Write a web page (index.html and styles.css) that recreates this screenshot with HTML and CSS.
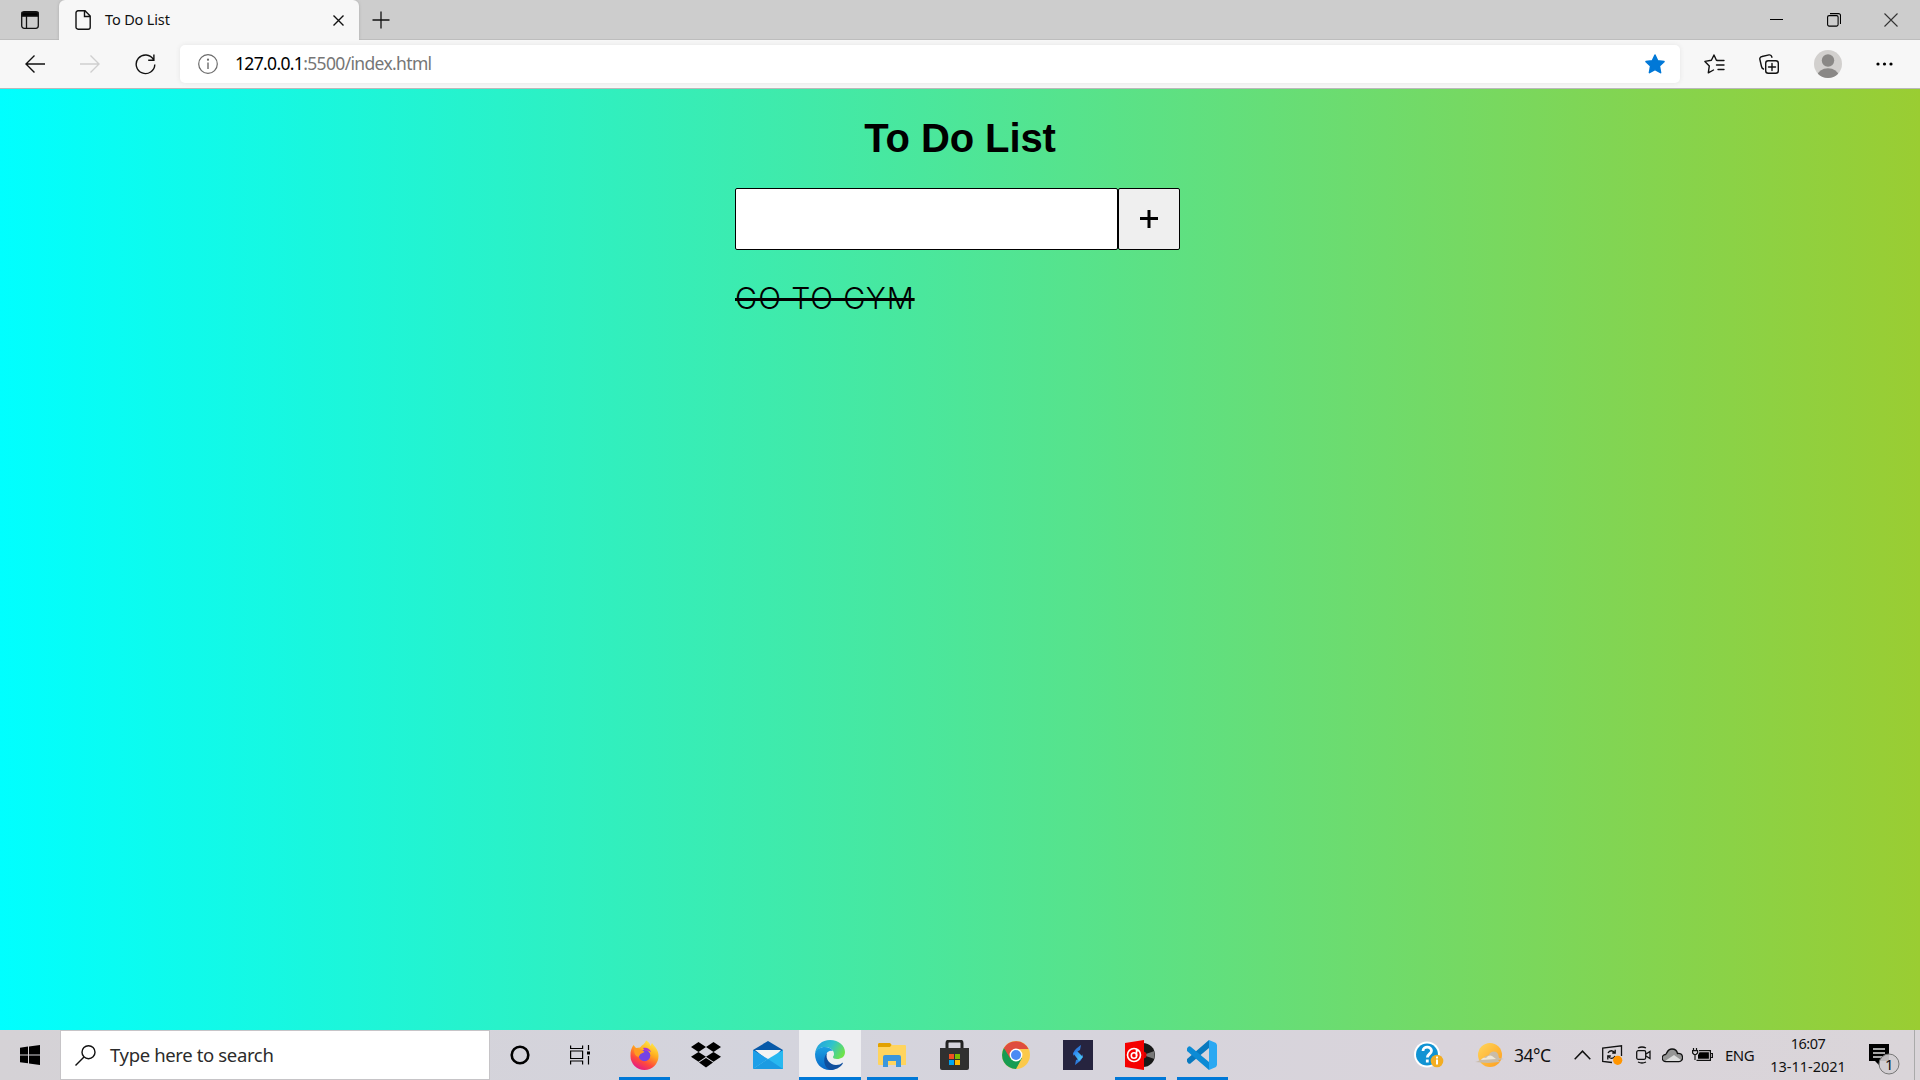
FILE: index.html
```html
<!DOCTYPE html>
<html lang="en">
<head>
<meta charset="utf-8">
<title>To Do List</title>
<link rel="stylesheet" href="styles.css">
</head>
<body>
<div class="screen">
  <header class="tabstrip">
    <div class="tab-actions">
      <svg width="18" height="18" viewBox="0 0 18 18" fill="none" stroke="#111" stroke-width="1.3"><rect x=".7" y=".7" width="16.6" height="16.6" rx="2.5"/><path d="M1 1.5h16v3.700H1z" fill="#000"/><path d="M5.500 5v12"/></svg>
    </div>
    <div class="tab">
      <svg width="16" height="20" viewBox="0 0 16 20" fill="none" stroke="#111" stroke-width="1.400"><path d="M3 .8h7l5.200 5.200v11.200a2 2 0 0 1-2 2H3a2 2 0 0 1-2-2V2.800a2 2 0 0 1 2-2zM9.500 1v5.500H15"/></svg>
      <span class="tab-title">To Do List</span>
      <svg class="tab-close" width="11" height="11" viewBox="0 0 11 11" stroke="#111" stroke-width="1.400"><path d="M.5.5l10 10M10.500.5l-10 10"/></svg>
    </div>
    <svg class="new-tab" width="18" height="18" viewBox="0 0 18 18" stroke="#111" stroke-width="1.300"><path d="M9 .5v17M.5 9h17"/></svg>
    <div class="window-controls">
      <span><svg width="13" height="13" stroke="#000"><path d="M0 6.500h13"/></svg></span>
      <span><svg width="14" height="14" viewBox="0 0 14 14" fill="none" stroke="#000" stroke-width="1.100"><rect x=".6" y="2.600" width="10.500" height="10.500" rx="1.500"/><path d="M3 .6h8.500a2 2 0 0 1 2 2V11"/></svg></span>
      <span><svg width="14" height="14" viewBox="0 0 14 14" stroke="#333" stroke-width="1.100"><path d="M.5.5l13 13M13.500.5l-13 13"/></svg></span>
    </div>
  </header>
  <nav class="toolbar">
    <div class="nav-buttons">
      <svg width="20" height="18" viewBox="0 0 20 18" fill="none" stroke="#111" stroke-width="1.400"><path d="M20 9H1M9.500.5L1 9l8.500 8.500"/></svg>
      <svg width="20" height="18" viewBox="0 0 20 18" fill="none" stroke="#cfcfcf" stroke-width="1.400"><path d="M0 9h19M10.500.5L19 9l-8.500 8.500"/></svg>
      <svg width="21" height="21" viewBox="0 0 21 21" fill="none" stroke="#111" stroke-width="1.400"><path d="M18.500 5.500A9.300 9.300 0 1 0 19.800 10.500M18.900.5v5.700h-5.700"/></svg>
    </div>
    <div class="address">
      <svg width="20" height="20" viewBox="0 0 20 20" fill="none" stroke="#6b6b6b" stroke-width="1.200"><circle cx="10" cy="10" r="9.300"/><path d="M10 8.500V15" stroke-width="1.400"/><circle cx="10" cy="5.700" r=".5" fill="#6b6b6b"/></svg>
      <span class="url"><b>127.0.0.1</b>:5500/index.html</span>
      <svg class="fav" width="20" height="20" viewBox="0 0 20 20"><path d="M10 1l2.700 5.700 6.300.9-4.600 4.400 1.200 6.700L10 15.600l-5.600 3.100L5.600 12 1 7.600l6.300-.9z" fill="#0078d7" stroke="#0078d7" stroke-width="1.500" stroke-linejoin="round"/></svg>
    </div>
    <div class="tools">
      <svg width="21" height="20" viewBox="0 0 21 20" fill="none" stroke="#111" stroke-width="1.400" stroke-linejoin="round" stroke-linecap="round"><path d="M13.200 6.500l-.8-.2L10 1 7.400 6.300.9 7.400l4.400 4.500-1 7L9.500 16M13.500 6.500H20M12.500 11H20M14 15.500h6"/></svg>
      <svg width="20" height="20" viewBox="0 0 20 20" fill="none" stroke="#111" stroke-width="1.400" stroke-linecap="round"><rect x="6.700" y="6.700" width="12.600" height="12.600" rx="2.500"/><path d="M13 9.500v7M9.500 13h7M4.500 15c-1.500-.5-1.800-1.500-2-2.500L.9 5.500C.5 4 1.500 2.800 3 2.500L10 .9c1.600-.3 2.500.5 3 2.300"/></svg>
      <svg width="28" height="28" viewBox="0 0 28 28"><defs><clipPath id="avatar"><circle cx="14" cy="14" r="14"/></clipPath></defs><circle cx="14" cy="14" r="14" fill="#d2d0ce"/><g fill="#8a8886" clip-path="url(#avatar)"><circle cx="14" cy="10.500" r="6.200"/><ellipse cx="14" cy="25.500" rx="10.500" ry="7.200"/></g></svg>
      <svg width="17" height="4" viewBox="0 0 17 4"><circle cx="2" cy="2" r="1.600"/><circle cx="8.500" cy="2" r="1.600"/><circle cx="15" cy="2" r="1.600"/></svg>
    </div>
  </nav>

  <main class="page">
    <div class="todo">
      <h1>To Do List</h1>
      <form class="entry">
        <input class="entry-text" type="text" aria-label="Item">
        <button class="entry-add" type="button" aria-label="Add"><svg width="18" height="18" viewBox="0 0 18 18" stroke="#000" stroke-width="3"><path d="M9 0v18M0 8.500h18"/></svg></button>
      </form>
      <ul class="items"><li class="done">GO TO GYM</li></ul>
    </div>
  </main>

  <footer class="taskbar">
    <div class="start"><svg width="20" height="20" viewBox="0 0 20 20"><path d="M0 2.700l8-1.100v7.800H0zM9 1.500L20 0v9.400H9zM0 10.400h8v7.900l-8-1.100zM9 10.400h11V20L9 18.500z"/></svg></div>
    <div class="search">
      <svg width="21" height="21" viewBox="0 0 21 21" fill="none" stroke="#111" stroke-width="1.400"><circle cx="13.500" cy="7.200" r="6.500"/><path d="M9 12L.5 20.500"/></svg>
      <span>Type here to search</span>
    </div>
    <div class="apps">
      <span class="app"><svg width="20" height="20"><circle cx="10" cy="10" r="8.300" fill="none" stroke="#000" stroke-width="2.600"/></svg></span>
      <span class="app"><svg width="20" height="20" viewBox="0 0 20 20" fill="none" stroke="#000" stroke-width="1.200"><path d="M.6.500v3h12v-3M.6 19.500v-3.500h12v3.500M.6 6h12v7.500H.6zM18.500 0v5M18.500 11v8.500"/><path d="M17 6.500h3v3h-3z" fill="#000" stroke="none"/></svg></span>
      <span class="app running"><svg width="29" height="30" viewBox="0 0 29 30"><defs><linearGradient id="ff" x1=".8" y1="0" x2=".3" y2="1"><stop offset="0" stop-color="#fff44f"/><stop offset=".4" stop-color="#ffac1e"/><stop offset=".72" stop-color="#ff4a3c"/><stop offset="1" stop-color="#e3168a"/></linearGradient></defs><path d="M3.500 5l2.500 3 4-.5C12 5 15 4 16 .5c2.500 1 4 3 4.500 5.500l1.500-3c3 4 6.500 7 6.500 13a14 14 0 0 1-28 0C.3 11 1.500 8 3.500 5z" fill="url(#ff)"/><circle cx="14.500" cy="15.500" r="5.800" fill="#7542e5"/><path d="M4 9c3-2 5 0 9 1.500l1.500 1.500-4 2-2 3C5 16 4 13 4 9z" fill="#ff9b22"/><path d="M13 8c4-1 7 1 8 4-3-2-5-1-6-1z" fill="#ab36cf"/></svg></span>
      <span class="app"><svg width="30" height="26" viewBox="0 0 30 26"><path d="M7.500 0L15 5l-7.500 5L0 5zM22.500 0L30 5l-7.500 5L15 5zM7.500 10l7.500 4.700-7.500 5L0 14.700zM22.500 10l7.500 4.700-7.500 5-7.500-5zM15 16l7 4.600-7 4.900-7-4.900z"/></svg></span>
      <span class="app"><svg width="30" height="28" viewBox="0 0 30 28"><path d="M0 9l15-9 15 9v7H0z" fill="#0859a8"/><path d="M2 9h26l-11 12z" fill="#f3f3f3"/><path d="M0 9l15 9-15 10z" fill="#1d9fe8"/><path d="M30 9L15 18 0 28h30z" fill="#28b8f0"/><path d="M15 18L30 28H0z" fill="#1b9be2"/></svg></span>
      <span class="app running active"><svg width="30" height="30" viewBox="0 0 30 30"><defs><linearGradient id="eg" x1="0" y1=".2" x2="1" y2=".6"><stop offset="0" stop-color="#249fe0"/><stop offset=".5" stop-color="#2fc3cc"/><stop offset="1" stop-color="#6fe34a"/></linearGradient><linearGradient id="eb" y1="0" y2="1" x2="0"><stop stop-color="#1ba0e2"/><stop offset="1" stop-color="#0866c6"/></linearGradient></defs><path d="M0 14C1 5 7 0 15 0c9 0 15 6 15 12 0 5-4 7-8 7-3 0-4-1-4-2 0-1 1-1 1-3 0-4-4-7-9-7S1 10 0 14z" fill="url(#eg)"/><path d="M0 14c1-5 5-7 10-7 3 0 6 1 8 4-4-1-7 1-7 6 0 7 5 12 9 12-2 1-3 1-5 1C6 30 0 23 0 14z" fill="url(#eb)"/><path d="M12 13c-2 6 3 12 9 12 3 0 5-1 6-2 .7-.4 1 .2.700.8C25 28 20 30 16 30 9 29 7 18 12 13z" fill="#104f9e"/></svg></span>
      <span class="app running"><svg width="28" height="24" viewBox="0 0 28 24"><path d="M1 0h11l2 2h13a1 1 0 0 1 1 1v19H1a1 1 0 0 1-1-1V1z" fill="#ffd45e"/><path d="M1 0h11l1.500 2L12 4H0V1z" fill="#e2a100"/><path d="M5 24V14a2 2 0 0 1 2-2h14a2 2 0 0 1 2 2v10h-5v-6h-8v6z" fill="#3a96dd"/></svg></span>
      <span class="app"><svg width="29" height="30" viewBox="0 0 29 30"><path d="M7 8V3a2 2 0 0 1 2-2h11a2 2 0 0 1 2 2v5" fill="none" stroke="#222" stroke-width="3"/><path d="M0 8h29v20a2 2 0 0 1-2 2H2a2 2 0 0 1-2-2z" fill="#303030"/><path d="M9 14h5v5H9z" fill="#f25022"/><path d="M15 14h5v5h-5z" fill="#7fba00"/><path d="M9 20h5v5H9z" fill="#00a4ef"/><path d="M15 20h5v5h-5z" fill="#ffb900"/></svg></span>
      <span class="app"><svg width="28" height="28" viewBox="0 0 28 28"><circle cx="14" cy="14" r="14" fill="#fbc94b"/><path d="M14 14L1.900 7A14 14 0 0 0 14 28l6-11z" fill="#179c52"/><path d="M1.900 7A14 14 0 0 1 26.500 8H14l-6 9z" fill="#df4d3e"/><circle cx="14" cy="14" r="6.400" fill="#fff"/><circle cx="14" cy="14" r="5" fill="#4a8af4"/></svg></span>
      <span class="app"><svg width="30" height="30" viewBox="0 0 30 30"><defs><linearGradient id="sg" x2="1" y2="1"><stop stop-color="#277af0"/><stop offset="1" stop-color="#55d7f3"/></linearGradient></defs><path d="M0 0h30v30H0z" fill="#26243f"/><path d="M18 5l-1 5-5 3-2 3c0-6 4-8 8-11zM12 25l1-5 5-2 2-4c0 6-4 8-8 11z" fill="#2d7cdc"/><path d="M10 13l4-2 6 6-4 4z" fill="url(#sg)"/></svg></span>
      <span class="app running"><svg width="30" height="30" viewBox="0 0 30 30"><circle cx="18" cy="15" r="12" fill="#181818"/><path d="M18 15l11.500-4v8z" fill="#777"/><circle cx="18" cy="15" r="3.500" fill="#d60000"/><path d="M0 3l19-3v30L0 27z" fill="#f50000"/><g fill="none" stroke="#fff" stroke-width="1.600"><circle cx="9" cy="15" r="6.500"/><circle cx="9" cy="15.500" r="2.700"/><path d="M11.500 16v-6l2 1"/></g></svg></span>
      <span class="app running"><svg width="30" height="30" viewBox="0 0 30 30"><path d="M0 19L22 0v8L4 23a2 2 0 0 1-3 0c-1-1-2-3-1-4z" fill="#0879bf"/><path d="M0 11c-1-1 0-3 1-4a2 2 0 0 1 3 0l18 15v8z" fill="#0c8bd5"/><path d="M22 0l7 3 1 2v20l-1 2-7 3z" fill="#2aa8f2"/></svg></span>
    </div>
    <div class="tray">
      <span class="help"><svg width="30" height="28" viewBox="0 0 30 28"><circle cx="13" cy="13.500" r="13" fill="#fff"/><circle cx="13" cy="13.500" r="11" fill="#1193d3"/><path d="M9 10c0-5 8.500-5 8.500-.3 0 3-4.200 3.300-4.200 6.800M13.300 18.500v3" fill="none" stroke="#fff" stroke-width="2.800"/><circle cx="23" cy="20" r="6.300" fill="#f3ad22"/><path d="M23 18.500v5M23 15.500v2" stroke="#fff" stroke-width="2"/></svg></span>
      <span class="weather"><svg width="30" height="25" viewBox="0 0 30 25"><defs><linearGradient id="sun" x2="1" y2="1"><stop stop-color="#ffd65c"/><stop offset="1" stop-color="#ff9d1c"/></linearGradient></defs><circle cx="15" cy="12" r="12" fill="url(#sun)"/><path d="M0 19c3 0 5-3 9-3 1-4 4-3 5-4 1-4 7-5 9-1l1 4 5 1-6 1 2 2-12 1z" fill="#c9bca8"/><path d="M6 17c2-3 4-2 5-2 2-3 5-3 6-2l4 3z" fill="#eee7d8"/></svg>34°C</span>
      <span class="chevron"><svg width="17" height="10" viewBox="0 0 17 10" fill="none" stroke="#111" stroke-width="1.500"><path d="M.7 9.300L8.500 1.200l7.800 8.100"/></svg></span>
      <span class="sync"><svg width="21" height="20" viewBox="0 0 21 20" fill="none" stroke="#111" stroke-width="1.300"><path d="M10 17.500L.7 16.500V3L19.500.8V11M6 8c1.500-3 5-3 7 0M13.200 4.800V8h-3M13 11c-1.500 3-5 3-6.500.5M5.800 14.500V11h3"/><circle cx="15.700" cy="15.300" r="4.600" fill="#ff9500" stroke="none"/></svg></span>
      <span class="meet"><svg width="15" height="18" viewBox="0 0 15 18" fill="none" stroke="#111" stroke-width="1.300"><rect x=".7" y="4.700" width="9" height="8.600" rx="1.500"/><path d="M10 8l4-2.500v7L10 10M2 2Q6 0 10 2M2 16q4 2 8 0"/></svg></span>
      <span class="cloud"><svg width="21" height="15" viewBox="0 0 21 15"><path d="M4 13.500a3.500 3.500 0 0 1-.5-7C5 6 5 1 10 1c3.500 0 5 2 5.500 4.500C22 5 22 13.500 17 13.500z" fill="#969696" stroke="#111" stroke-width="1.300"/><path d="M3 13l9-6 7 5-2 1z" fill="#ddd"/></svg></span>
      <span class="battery"><svg width="21" height="14" viewBox="0 0 21 14" fill="none" stroke="#111" stroke-width="1.200"><path d="M1.500 0v2M4.500 0v2M.6 2.600h5v2.400l-1.500 1.500H2L.6 5zM3 6.500V12M7 2.600h11.400v9.800H4.500M19 5.500h1.400v4H19"/><path d="M7.500 4.300h9.400v6.400H6V7z" fill="#000" stroke="none"/></svg></span>
      <span class="language">ENG</span>
      <span class="clock"><span>16:07</span><span class="date">13-11-2021</span></span>
      <span class="notifications"><svg width="31" height="31" viewBox="0 0 31 31"><path d="M0 0h20v17H11v5l-5-5H0z"/><path d="M4 5h12M4 9h12M4 13h9" stroke="#ddd" stroke-width="1.300"/><circle cx="20" cy="20" r="10" fill="#d0cdd0" fill-opacity=".9" stroke="#777"/></svg><span class="count">1</span></span>
      <span class="show-desktop"></span>
    </div>
  </footer>
</div>
</body>
</html>
```
FILE: styles.css
```css
* { box-sizing: border-box; }
body { margin: 0; font-family: "Noto Sans", "Open Sans", sans-serif; color: #111; }
svg { display: block; flex: none; }
.screen { width: 1920px; height: 1080px; display: flex; flex-direction: column; overflow: hidden; }

.tabstrip { height: 40px; display: flex; align-items: center; background: #cdcdcd; box-shadow: inset 0 -1px #bdbdbd; }
.tab-actions { width: 59px; padding-left: 21px; }
.tab { width: 300px; height: 40px; display: flex; align-items: center; padding: 0 15px 0 16px; background: #f7f7f7; border-radius: 6px 6px 0 0; box-shadow: 0 0 3px #aaa; clip-path: inset(0 -3px); }
.tab-title { flex: 1; margin-left: 14px; padding-bottom: 2px; font-size: 14.5px; letter-spacing: -.15px; }
.new-tab { margin-left: 13px; }
.window-controls { margin-left: auto; display: flex; }
.window-controls span { width: 57.500px; display: flex; justify-content: center; }

.toolbar { height: 49px; display: flex; align-items: center; background: #f7f7f7; border-bottom: 1px solid #b9b9b9; }
.nav-buttons { width: 180px; display: flex; align-items: center; gap: 35px; padding-left: 25px; }
.address { width: 1500px; height: 38px; display: flex; align-items: center; padding: 0 15px 0 18px; background: #fff; border-radius: 5px; box-shadow: 0 0 5px #e4e4e4; }
.url { flex: 1; margin-left: 17px; padding-bottom: 2px; font-size: 17.5px; letter-spacing: -.66px; color: #767676; }
.url b { font-weight: 400; color: #000; }
.tools { flex: 1; display: flex; align-items: center; justify-content: space-between; padding: 0 27px 0 24px; }

.page { flex: 1; background: linear-gradient(to right, aqua, yellowgreen); font-family: "Liberation Sans", Arial, sans-serif; }
.todo { width: 450px; margin: 0 auto; }
.todo h1 { margin: 0; padding-top: 26px; height: 99px; font-size: 40px; line-height: 46px; text-align: center; color: #000; letter-spacing: -.1px; }
.entry { display: flex; margin: 0; }
.entry-text, .entry-add { height: 62px; border: 1px solid #000; border-radius: 2px; padding: 0; }
.entry-text { width: 383px; background: #fff; }
.entry-add { width: 62px; display: flex; align-items: center; justify-content: center; padding-bottom: 1px; background: #efefef; }
.items { list-style: none; margin: 28px 0 0; padding: 0; }
.done { width: max-content; font-family: Inter, "Liberation Sans", sans-serif; font-weight: 300; font-size: 30px; line-height: 40px; letter-spacing: .9px; color: #000; text-decoration: line-through 3px; }

.taskbar { height: 50px; display: flex; align-items: stretch; background: linear-gradient(to right, #d5d2d6, #d4d4dd 40%, #d9d4db 75%, #dad5d9); }
.start { width: 60px; display: flex; align-items: center; justify-content: center; }
.search { width: 430px; display: flex; align-items: center; gap: 14px; padding-left: 14px; background: #fff; border: 1px solid #c6c4c7; font-size: 18.5px; letter-spacing: -.36px; color: #2b2b2b; }
.search span { padding-bottom: 2px; }
.apps { display: flex; }
.app { width: 62px; display: flex; align-items: center; justify-content: center; }
.app:first-child { width: 60px; }
.app:nth-child(2) { padding-right: 2px; }
.app:nth-child(3) { margin-left: 1px; }
.running { background: linear-gradient(#0078d7, #0078d7) 50% 100% / 51px 3px no-repeat; }
.active { background: linear-gradient(#0078d7, #0078d7) 50% 100% / 62px 3px no-repeat #eeeef1; }

.tray { margin-left: auto; display: flex; align-items: center; font-size: 15.5px; letter-spacing: -.5px; }
.help { width: 61px; }
.weather { width: 99px; display: flex; align-items: center; gap: 9px; font-size: 17.5px; }
.chevron { width: 28px; }
.sync { width: 34px; }
.meet { width: 26px; }
.cloud { width: 30px; }
.battery { width: 33px; }
.language { width: 45px; font-size: 15px; }
.clock { width: 76px; display: flex; flex-direction: column; align-items: center; font-size: 14.500px; line-height: 23px; white-space: nowrap; }
.date { letter-spacing: 0; }
.notifications { position: relative; width: 45px; margin: 9px 0 0 23px; }
.count { position: absolute; left: 16px; top: 9px; font-size: 15px; line-height: 22px; }
.show-desktop { align-self: stretch; width: 6px; border-left: 1px solid #aaa; }
```
